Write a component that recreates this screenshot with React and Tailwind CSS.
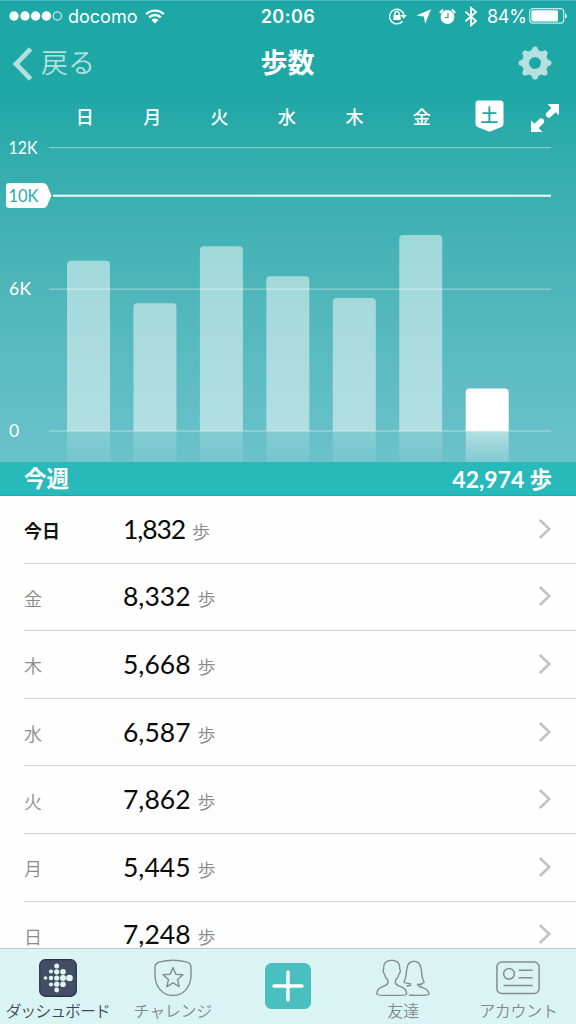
import { useState } from "react";

const week = [
   { day: "日", steps: 7248 },
   { day: "月", steps: 5445 },
   { day: "火", steps: 7862 },
   { day: "水", steps: 6587 },
   { day: "木", steps: 5668 },
   { day: "金", steps: 8332 },
   { day: "土", steps: 1832, today: true },
];

const CHART_TOP = 12;
const CHART_BASE = 295;
const MAX_STEPS = 12000;

const StatusBar = () => (
   <div className="relative flex h-8 items-center justify-between pl-[9px] pr-[9px] font-['Inter','Liberation_Sans',sans-serif] text-[18.5px] text-white">
      <div className="flex items-center">
         <svg width="54" height="12" viewBox="0 0 54 12" fill="#fff">
            <circle cx="5" cy="6" r="4.7" />
            <circle cx="16" cy="6" r="4.7" />
            <circle cx="26.6" cy="6" r="4.7" />
            <circle cx="37.4" cy="6" r="4.7" />
            <circle cx="48.3" cy="6" r="4.1" fill="none" stroke="#fff" strokeWidth="1" />
         </svg>
         <span className="ml-[5px] w-[70px] whitespace-nowrap text-[18px]">docomo</span>
         <svg className="ml-[7px]" width="20" height="15" viewBox="0 0 20 15" fill="none" stroke="#fff" strokeWidth="2.4">
            <path d="M1.2 5.2a12.5 12.5 0 0 1 17.6 0" />
            <path d="M4.2 8.4a8.2 8.2 0 0 1 11.6 0" />
            <path d="M6.5 11a5 5 0 0 1 7 0L10 14.5z" fill="#fff" stroke="none" />
         </svg>
      </div>
      <span className="absolute left-1/2 w-[60px] -translate-x-1/2 text-center text-[18px] font-semibold tracking-[0.5px]">
         20:06
      </span>
      <div className="flex items-center">
         <svg width="20" height="18" viewBox="0 0 20 18" fill="none" stroke="#fff" strokeWidth="1.4">
            <path d="M14.5 14.2A7.3 7.3 0 1 1 16 8.2" />
            <path d="M12.6 8h6.2l-3.1 3.8z" fill="#fff" stroke="none" />
            <rect x="5.4" y="8" width="7.2" height="5" rx=".5" fill="#fff" stroke="none" />
            <path d="M6.8 8.5V6.7a2.2 2.2 0 0 1 4.4 0v1.8" />
         </svg>
         <svg className="ml-2" width="15" height="15" viewBox="0 0 15 15" fill="#fff">
            <path d="M15 .3 9.2 14.8 7.8 7.6.4 6.4z" />
         </svg>
         <svg className="ml-2" width="17" height="17" viewBox="0 0 17 17" fill="none">
            <circle cx="8.5" cy="9" r="6.9" fill="#fff" />
            <path d="M9 5v4.5H5.5" stroke="#1ea8a6" strokeWidth="1.2" />
            <path d="M1 5.2A9 9 0 0 1 4.2 1.5M16 5.2a9 9 0 0 0-3.2-3.7" stroke="#fff" strokeWidth="2" />
         </svg>
         <svg className="ml-2" width="14" height="21" viewBox="0 0 14 21" fill="none" stroke="#fff" strokeWidth="1.8">
            <path d="M1.5 5.8 12 15l-5 4.2V1.8L12 6 1.5 15.2" />
         </svg>
         <span className="ml-[9px] w-[38px] whitespace-nowrap text-[18px] tracking-[-0.3px]">84%</span>
         <svg className="ml-[4px]" width="38" height="16" viewBox="0 0 38 16" fill="none">
            <rect x=".7" y=".7" width="34" height="14.4" rx="3" stroke="#fff" strokeOpacity=".75" strokeWidth="1.2" />
            <rect x="2.4" y="2.3" width="26.6" height="11.2" rx="1.5" fill="#fff" />
            <path d="M36 5.2c2.2.6 2.2 4.8 0 5.4z" fill="#fff" />
         </svg>
      </div>
   </div>
);

const NavBar = () => (
   <div className="grid h-16 grid-cols-3 items-center pb-0.5 pl-3 pr-6">
      <button className="flex items-center text-[#b5e0e0]">
         <svg className="mt-0.5" width="21" height="34" viewBox="0 0 21 34" fill="none" stroke="currentColor" strokeWidth="4.8">
            <path d="M18.7 1.8 4 17l14.7 15.2" />
         </svg>
         <span className="mb-0.5 ml-2 whitespace-nowrap text-[27px] font-[350] leading-8">戻る</span>
      </button>
      <h1 className="mb-0.5 pl-[11px] text-center text-[27px] font-bold leading-8 text-white">歩数</h1>
      <button className="justify-self-end text-[#b5e0e0]" aria-label="settings">
         <svg width="34" height="34" viewBox="-17 -17 34 34" fill="currentColor">
            <path
               fillRule="evenodd"
               d="M-2-16Q0-17 2-16L3.6-12.700 6.600-11.500 9.800-12.800Q12.400-12.400 12.800-9.800L11.500-6.600 12.700-3.600 16-2Q17 0 16 2L12.700 3.600 11.500 6.600 12.800 9.800Q12.400 12.400 9.800 12.800L6.600 11.500 3.600 12.700 2 16Q0 17-2 16L-3.600 12.700-6.600 11.500-9.800 12.800Q-12.400 12.400-12.800 9.800L-11.500 6.600-12.700 3.600-16 2Q-17 0-16-2L-12.700-3.600-11.500-6.600-12.800-9.800Q-12.400-12.400-9.800-12.800L-6.600-11.500-3.600-12.700ZM0-6A6 6 0 1 0 0 6 6 6 0 1 0 0-6Z"
            />
         </svg>
      </button>
   </div>
);

const WeekdayRow = () => (
   <div className="flex h-10 items-center pl-[51px] pr-4 text-[18px] font-medium text-white">
      <div className="grid w-[472px] grid-cols-7 place-items-center">
         {week.map(({ day, today }) =>
            today ? (
               <span key={day} className="relative flex h-8 w-[29px] justify-center leading-[29px] text-[#1fa8a7]">
                  <svg className="absolute inset-0" width="29" height="32" viewBox="0 0 29 32" fill="#fff">
                     <path d="M3.5.5h22a3 3 0 0 1 3 3v20.3q0 2.2-2 3.1L14.5 31.8 2.5 26.9q-2-.9-2-3.1V3.500a3 3 0 0 1 3-3z" />
                  </svg>
                  <span className="relative">{day}</span>
               </span>
            ) : (
               <span key={day}>{day}</span>
            )
         )}
      </div>
      <svg className="ml-2 mt-1 shrink-0" width="28" height="28" viewBox="0 0 28 28" fill="#fff">
         <path d="M16.500 0H28v11.500l-3.300-3.300-5.700 5.300q-1.700.9-3.300-.7t-.7-3.500l5.400-5.400zM0 16.500l3.300 3.300 5.700-5.300q1.700-.9 3.300.7t.7 3.500l-5.400 5.400 3.900 3.900H0z" />
      </svg>
   </div>
);

const StepsChart = () => (
   <svg className="block" width="576" height="326" viewBox="0 0 576 326">
      <defs>
         <linearGradient id="reflection" x1="0" y1="0" x2="0" y2="1">
            <stop offset="0" stopColor="#fff" stopOpacity=".2" />
            <stop offset="1" stopColor="#fff" stopOpacity=".07" />
         </linearGradient>
         <linearGradient id="todayReflection" x1="0" y1="0" x2="0" y2="1">
            <stop offset="0" stopColor="#fff" stopOpacity=".5" />
            <stop offset="1" stopColor="#fff" stopOpacity=".15" />
         </linearGradient>
      </defs>

      {week.map(({ day, steps, today }, i) => {
         const x = 67 + i * 66.45;
         const h = (steps / MAX_STEPS) * (CHART_BASE - CHART_TOP);
         const top = CHART_BASE - h + 0.6;
         return (
            <g key={day}>
               <path
                  d={`M${x} ${CHART_BASE}V${top + 4}q0-4 4-4h35q4 0 4 4V${CHART_BASE}z`}
                  fill="#fff"
                  fillOpacity={today ? 1 : 0.49}
               />
               <rect x={x} y={CHART_BASE} width="43" height="31" fill={today ? "url(#todayReflection)" : "url(#reflection)"} />
            </g>
         );
      })}

      {/* grid lines */}
      <g fill="#fff" fillOpacity=".38">
         <rect x="49" y="11" width="502" height="1.3" />
         <rect x="49" y="152.5" width="502" height="1.3" />
         <rect x="49" y="294.2" width="502" height="1.6" fillOpacity=".3" />
      </g>

      {/* daily goal */}
      <rect x="53" y="58.700" width="498" height="2" fill="#fff" />
      <path d="M9 47h34q3 0 4.200 2.500L51.500 59.500 47.200 69.500Q46 72 43 72H9q-3 0-3-3V50q0-3 3-3z" fill="#fff" />

      <g className="font-['Lato','Liberation_Sans',sans-serif]" fill="#fff" fontSize="17.5">
         <text x="8.500" y="17.500" textLength="29" lengthAdjust="spacingAndGlyphs">12K</text>
         <text x="8.500" y="65.500" textLength="30" lengthAdjust="spacingAndGlyphs" fill="#28abab">10K</text>
         <text x="9" y="159" textLength="22">6K</text>
         <text x="9" y="300.500">0</text>
      </g>
   </svg>
);

const DayRow = ({ day, steps, today }) => (
   <li className="ml-6 flex h-[67.6px] shrink-0 items-center border-b border-[#d2d2d4] pb-px pr-6">
      <span
         className={
            today
               ? "w-[99px] pt-1 text-[18px] font-bold text-[#111]"
               : "w-[99px] pt-1 text-[18px] font-[350] text-[#8a8a8a]"
         }
      >
         {today ? "今日" : day}
      </span>
      <span
         className={`font-['Lato','Liberation_Sans',sans-serif] text-[26.5px] leading-8 text-[#0b0b0b] ${today ? "tracking-[-1.1px]" : ""}`}
      >
         {steps.toLocaleString("en-US")}
      </span>
      <span className="ml-[7px] pt-1 text-[18px] font-[350] leading-7 text-[#8a8a8a]">歩</span>
      <svg className="ml-auto" width="14" height="22" viewBox="0 0 14 22" fill="none" stroke="#c2c2c7" strokeWidth="2.6">
         <path d="M1.800 2 11.300 11 1.800 20" />
      </svg>
   </li>
);

const DashboardIcon = () => (
   <svg width="38" height="38" viewBox="0 0 38 38">
      <rect x=".7" y=".7" width="36.6" height="36.6" rx="5.5" fill="#434d63" stroke="#28324f" strokeWidth="1.2" />
      <g fill="#dff6f4">
         <circle cx="6.5" cy="19" r="1.8" />
         <circle cx="12" cy="12.5" r="2.1" />
         <circle cx="12" cy="19" r="2.2" />
         <circle cx="12" cy="25.5" r="2.1" />
         <circle cx="17.7" cy="7" r="2.5" />
         <circle cx="17.7" cy="12.8" r="2.6" />
         <circle cx="17.7" cy="19" r="2.6" />
         <circle cx="17.7" cy="25.2" r="2.6" />
         <circle cx="17.7" cy="31" r="2.4" />
         <circle cx="24" cy="12.8" r="2.8" />
         <circle cx="24" cy="19" r="3" />
         <circle cx="24" cy="25.2" r="2.8" />
         <circle cx="30.5" cy="19" r="3.3" />
      </g>
   </svg>
);

const ChallengeIcon = () => (
   <svg width="38" height="38" viewBox="0 0 38 38" fill="none" stroke="#858d8e" strokeWidth="1.4" strokeLinejoin="round">
      <path d="M5 3.2Q19-.8 33 3.2q3.8 1 4 5v7.5C37 27 30 36.5 19 36.5S1 27 1 15.7V8.2q.2-4 4-5z" />
      <path d="m19 8.500 2.800 6.700 7.200.6-5.500 4.700 1.700 7.100L19 23.800l-6.200 3.800 1.700-7.100L9 15.800l7.200-.6z" />
   </svg>
);

const FriendsIcon = () => (
   <svg width="54" height="38" viewBox="0 0 54 38" fill="none" stroke="#858d8e" strokeWidth="1.4" strokeLinejoin="round">
      <path d="M15.700 1.200C10 1.200 7.200 4.600 7.700 10q-1.200 1.200-.3 3.300l1.200 2.200q.5 3.500 3.300 5.600v3.400Q10.500 26.300 5 28.300C2 29.500.9 31.700.8 35.200q0 1.200 14.900 1.200t14.900-1.200c-.1-3.500-1.200-5.700-4.200-6.900q-5.500-2-6.900-3.800v-3.400q2.800-2.100 3.300-5.600l1.200-2.200q.9-2.100-.3-3.300c.5-5.400-2.300-8.800-8-8.800z" />
      <path d="M33 36q2 .4 7 .4 12.500 0 13-1.200-.3-4.600-5.800-6.400-5-1.600-5.500-3.300 4.300.3 6.500-2.500-2.500-4-2.700-11-.6-9.800-7.500-9.800T30.500 12q-.3 7-2.700 11 .7 1.200 6.700 1.600v1.700l-4 1" />
   </svg>
);

const AccountIcon = () => (
   <svg width="44" height="34" viewBox="0 0 44 34" fill="none" stroke="#858d8e" strokeWidth="1.5">
      <rect x=".9" y="1" width="42.2" height="31.5" rx="5" />
      <circle cx="13" cy="12.8" r="5.4" />
      <path d="M22.700 9.200h14M22.700 16.700h14M7.500 24.500h29.200" />
   </svg>
);

const tabs = [
   { label: "ダッシュボード", icon: <DashboardIcon />, spacing: "tracking-[-1.1px]" },
   { label: "チャレンジ", icon: <ChallengeIcon />, spacing: "tracking-[-0.3px]" },
   null,
   { label: "友達", icon: <FriendsIcon />, spacing: "tracking-normal" },
   { label: "アカウント", icon: <AccountIcon />, spacing: "tracking-[-0.3px]" },
];

const TabBar = () => {
   const [active, setActive] = useState(0);

   return (
      <nav className="grid h-[76px] shrink-0 grid-cols-5 border-t border-[#b8c6c6] bg-[#daf4f4]">
         {tabs.map((tab, index) =>
            tab ? (
               <button
                  key={tab.label}
                  onClick={() => setActive(index)}
                  className={`flex flex-col items-center pt-2.5 ${active === index ? "text-[#3c4660]" : "text-[#828a8b]"}`}
               >
                  <span className="flex h-[38px] items-center">{tab.icon}</span>
                  <span className={`mt-px whitespace-nowrap text-[16px] font-[350] leading-6 ${tab.spacing}`}>{tab.label}</span>
               </button>
            ) : (
               <button key="add" className="flex justify-center pt-3.5" aria-label="add">
                  <svg width="46" height="46" viewBox="0 0 46 46">
                     <rect width="46" height="46" rx="6.5" fill="#49bfbf" />
                     <path d="M23 9v28M9 23h28" stroke="#fff" strokeWidth="3.400" strokeLinecap="round" />
                  </svg>
               </button>
            )
         )}
      </nav>
   );
};

const App = () => {
   const total = week.reduce((sum, { steps }) => sum + steps, 0);

   return (
      <div className="flex h-[1024px] w-[576px] flex-col overflow-hidden bg-[#fefefe] font-['Noto_Sans_CJK_JP',sans-serif]">
         <header className="h-[462px] shrink-0 bg-linear-to-b from-[#1da8a6] from-20% to-[#6bc2ca] shadow-[inset_0_1px_0_#48b8b7]">
            <StatusBar />
            <NavBar />
            <WeekdayRow />
            <StepsChart />
         </header>
         <div className="flex h-[34px] shrink-0 items-center justify-between border-b border-[#12b1b1] bg-[#28baba] px-6 text-[22.5px] font-bold text-white">
            <span className="pb-0.5">今週</span>
            <span className="pt-0.5">
               <span className="font-['Lato','Liberation_Sans',sans-serif] text-[23px]">{total.toLocaleString("en-US")}</span> 歩
            </span>
         </div>
         <ul className="flex min-h-0 flex-1 flex-col overflow-hidden">
            {[...week].reverse().map((entry) => (
               <DayRow key={entry.day} {...entry} />
            ))}
         </ul>
         <TabBar />
      </div>
   );
};

export default App;
